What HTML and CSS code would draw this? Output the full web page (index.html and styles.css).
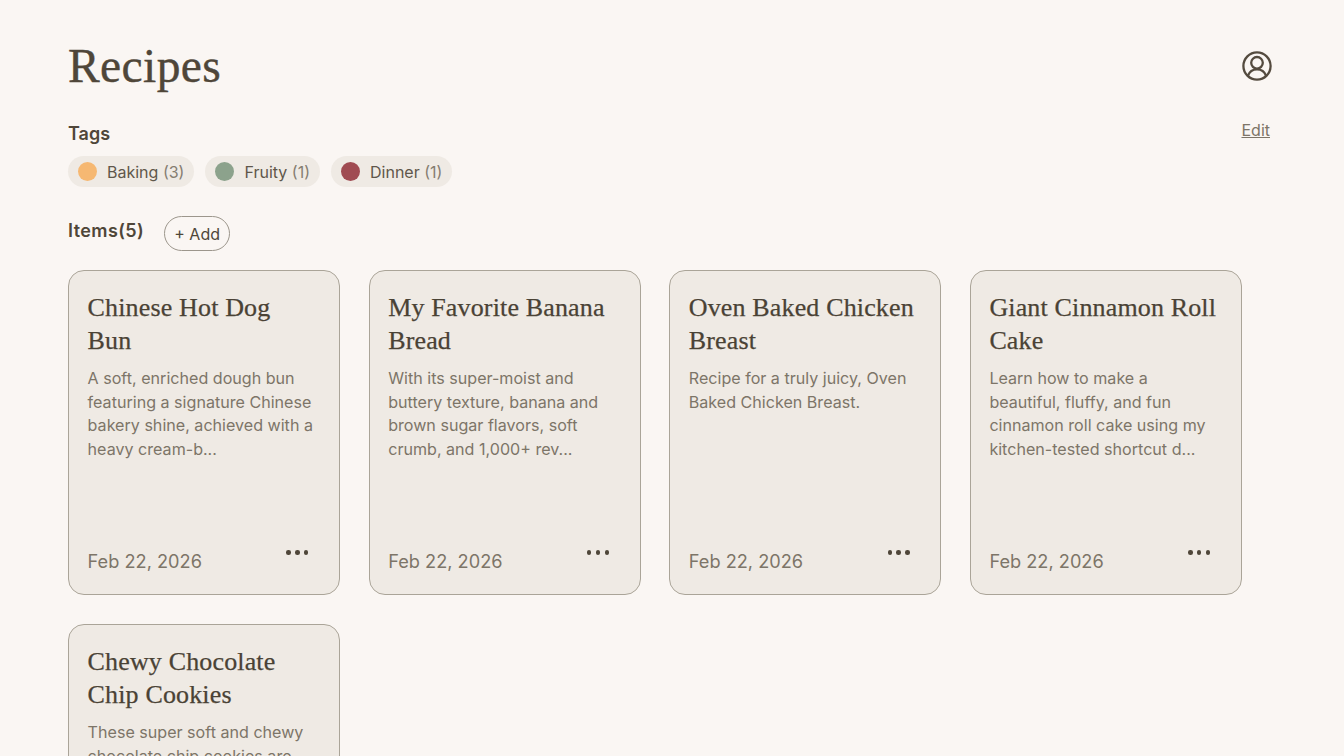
FILE: index.html
```html
<!DOCTYPE html>
<html lang="en">
<head>
<meta charset="utf-8">
<title>Recipes</title>
<link rel="stylesheet" href="styles.css">
</head>
<body>
<main class="page">
  <header class="top">
    <h1 class="title">Recipes</h1>
    <svg class="avatar" viewBox="0 0 32 32" fill="none" stroke="#544b3f" stroke-width="2.3">
      <circle cx="16" cy="16" r="13.6"/>
      <circle cx="16" cy="12.800" r="5.800"/>
      <path d="M6.800 26c1.600-4.300 5-6.600 9.200-6.600s7.600 2.300 9.200 6.600"/>
    </svg>
  </header>
  <section class="tags">
    <div class="tags-head">
      <h2 class="label">Tags</h2>
      <a class="edit" href="#">Edit</a>
    </div>
    <div class="chips">
      <span class="chip"><i class="dot dot-baking"></i>Baking <em>(3)</em></span>
      <span class="chip"><i class="dot dot-fruity"></i>Fruity <em>(1)</em></span>
      <span class="chip"><i class="dot dot-dinner"></i>Dinner <em>(1)</em></span>
    </div>
  </section>
  <div class="items-head">
    <h2 class="label label-items">Items(5)</h2>
    <button class="add">+ Add</button>
  </div>
  <section class="grid">
    <article class="card">
      <h3 class="card-title">Chinese Hot Dog Bun</h3>
      <p class="desc">A soft, enriched dough bun featuring a signature Chinese bakery shine, achieved with a heavy cream-b...</p>
      <footer class="foot"><span class="date">Feb 22, 2026</span><span class="more"><b></b><b></b><b></b></span></footer>
    </article>
    <article class="card">
      <h3 class="card-title">My Favorite Banana Bread</h3>
      <p class="desc">With its super-moist and buttery texture, banana and brown sugar flavors, soft crumb, and 1,000+ rev...</p>
      <footer class="foot"><span class="date">Feb 22, 2026</span><span class="more"><b></b><b></b><b></b></span></footer>
    </article>
    <article class="card">
      <h3 class="card-title">Oven Baked Chicken Breast</h3>
      <p class="desc">Recipe for a truly juicy, Oven Baked Chicken Breast.</p>
      <footer class="foot"><span class="date">Feb 22, 2026</span><span class="more"><b></b><b></b><b></b></span></footer>
    </article>
    <article class="card">
      <h3 class="card-title">Giant Cinnamon Roll Cake</h3>
      <p class="desc">Learn how to make a beautiful, fluffy, and fun cinnamon roll cake using my kitchen-tested shortcut d...</p>
      <footer class="foot"><span class="date">Feb 22, 2026</span><span class="more"><b></b><b></b><b></b></span></footer>
    </article>
    <article class="card">
      <h3 class="card-title">Chewy Chocolate Chip Cookies</h3>
      <p class="desc">These super soft and chewy chocolate chip cookies are incredibly easy to bake at home...</p>
      <footer class="foot"><span class="date">Feb 22, 2026</span><span class="more"><b></b><b></b><b></b></span></footer>
    </article>
  </section>
</main>
</body>
</html>
```
FILE: styles.css
```css
* { box-sizing: border-box; }
html, body { margin: 0; padding: 0; height: 100%; overflow: hidden; }
body { background: #faf6f3; color: #4f4639; font-family: Inter, "Liberation Sans", sans-serif; }
.page { padding: 41px 72px 0 68px; }
.top { display: flex; justify-content: space-between; align-items: center; height: 50px; }
.title { margin: 0; font: 400 47.5px/50px "Liberation Serif", serif; color: #4f4639; letter-spacing: 0.4px; -webkit-text-stroke: 0.4px #4f4639; }
.avatar { width: 32px; height: 32px; margin-right: -1px; }
.tags { margin-top: 29px; }
.tags-head { display: flex; justify-content: space-between; align-items: flex-start; height: 28px; }
.label { margin: 0; font-size: 18px; line-height: 28px; font-weight: 600; color: #4f4639; }
.label-items { margin-top: 1px; letter-spacing: 0.4px; }
.edit { margin: 0 2px 0 0; font-size: 16px; line-height: 20px; color: #7d7568; text-decoration: underline; }
.chips { display: flex; gap: 11px; margin-top: 8px; }
.chip { display: flex; align-items: center; height: 31px; padding: 0 10px; border-radius: 16px; background: #efeae4; font-size: 16px; color: #5f574b; white-space: pre; }
.chip em { font-style: normal; color: #857d71; }
.dot { width: 19px; height: 19px; border-radius: 50%; margin-right: 10px; }
.dot-baking { background: #f6b872; }
.dot-fruity { background: #8ca28c; }
.dot-dinner { background: #a04b52; }
.items-head { display: flex; align-items: flex-start; gap: 20px; margin-top: 29px; height: 35px; }
.add { height: 35px; width: 66px; padding: 0; border: 1px solid #9c968c; border-radius: 18px; background: transparent; font: 400 16px Inter, sans-serif; color: #4f4639; }
.grid { display: grid; grid-template-columns: repeat(4, 272px); gap: 29px 28.6px; margin-top: 19px; }
.card { display: flex; flex-direction: column; height: 325px; padding: 20px 18.600px 20px; border: 1px solid #aaa498; border-radius: 16px; background: #efeae4; }
.card-title { margin: 0; font: 400 26px/33px "Liberation Serif", serif; color: #4a4235; letter-spacing: 0.15px; -webkit-text-stroke: 0.25px #4a4235; }
.desc { margin: 10px 0 0; font-size: 16.1px; line-height: 23.7px; color: #7d7568; }
.foot { display: flex; justify-content: space-between; align-items: flex-start; margin-top: auto; }
.date { font-size: 18.200px; line-height: 26px; color: #7d7568; }
.more { display: flex; gap: 4.300px; margin: 2px 12px 0 0; }
.more b { width: 4.500px; height: 4.500px; border-radius: 50%; background: #4f4639; }
```
